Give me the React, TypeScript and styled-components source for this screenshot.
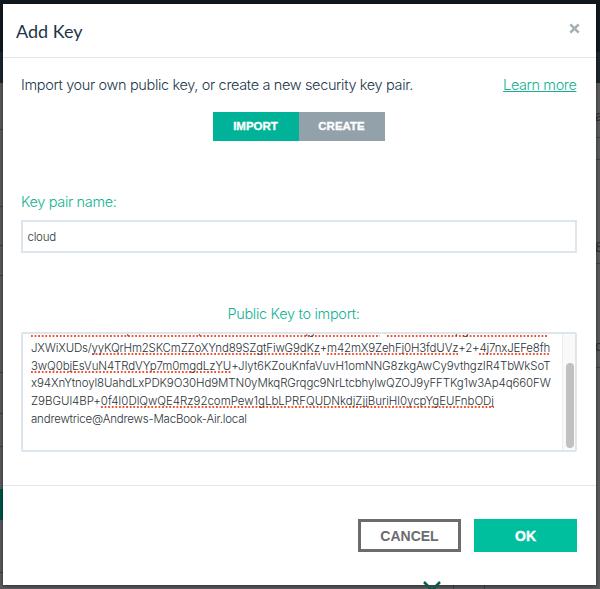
import React from "react";
import styled, { createGlobalStyle } from "styled-components";

const Global = createGlobalStyle`
  *{box-sizing:border-box}
  body{margin:0;background:#545659;font-family:Inter,"Liberation Sans",sans-serif;font-weight:300}
`;
const Backdrop = styled.div`
  width:600px;height:589px;padding:4px 4px 4px 3px;overflow:hidden;position:relative;
  background:linear-gradient(#11191f 0 52px,#1d272c 52px 83px,#5b5c5f 83px 100%);
`;
const Ghost = styled.span<{ $x: number; $y: number; $w: number; $h: number; $c: string }>`
  position:absolute;left:${p => p.$x}px;top:${p => p.$y}px;width:${p => p.$w}px;height:${p => p.$h}px;background:${p => p.$c};
`;
const GhostText = styled.span<{ $y: number }>`
  position:absolute;left:595px;top:${p => p.$y}px;font-size:13px;line-height:14px;font-weight:400;color:#2c2f31;
`;
const Chevron = styled.svg`position:absolute;left:421px;top:581px;width:22px;height:12px;`;
const Dialog = styled.section`
  position:relative;width:593px;height:581px;background:#fff;display:flex;flex-direction:column;
  box-shadow:0 1px 4px rgba(0,0,0,.55);
`;
const Header = styled.header`
  height:54px;border-bottom:1px solid #e5e5e5;padding:0 15px 0 13px;display:flex;justify-content:space-between;align-items:center;
`;
const Title = styled.h1`margin:0;font:400 18px/24px Lato,sans-serif;color:#1d3649;`;
const Close = styled.button`
  border:0;background:none;padding:0;width:13px;height:13px;display:flex;align-items:center;justify-content:center;margin-top:-4px;
`;
const Body = styled.main`height:428px;padding:17px 19px 0 18px;border-bottom:1px solid #e5e5e5;display:flex;flex-direction:column;`;
const Intro = styled.div`height:20px;display:flex;justify-content:space-between;line-height:20px;font-size:14.5px;color:#1d3649;`;
const Fit = styled.span<{ $s?: number }>`letter-spacing:${p => p.$s ?? 0}px;white-space:nowrap;`;
const Link = styled.a`color:#12b293;text-decoration:underline;letter-spacing:-.4px;margin-right:.6px;`;
const Tabs = styled.div`display:flex;margin:17px 0 0 191.5px;height:29px;width:172px;`;
const Tab = styled.button<{ $on?: boolean }>`
  border:0;padding:0;flex:1;background:${p => (p.$on ? "#00b398" : "#92a1aa")};color:#fff;font:700 11.5px/29px "Liberation Sans",sans-serif;
  -webkit-text-stroke:.3px #fff;
`;
const Label = styled.label<{ $center?: boolean }>`
  display:block;margin:51px 0 8px;line-height:20px;font-size:14.5px;color:#12b293;text-align:${p => (p.$center ? "center" : "left")};
  padding-right:${p => (p.$center ? "11px" : "0")};
`;
const Input = styled.div`
  height:33px;border:2px solid #dde5ed;padding:1px 5px 0 4.5px;line-height:29px;font-size:11.5px;color:#333;
`;
const Area = styled.div`
  height:120px;border:2px solid #dde5ed;border-radius:2px;display:flex;overflow:hidden;
`;
const Text = styled.div`flex:1;padding-left:8px;margin-top:-11.7px;font-size:11.5px;color:#2b3338;`;
const Line = styled.div`height:17.7px;line-height:17.7px;white-space:pre;`;
const Misspelt = styled.span`
  background:linear-gradient(90deg,#f5502f 0 2px,transparent 2px) left bottom/3.6px 2px repeat-x;
`;
const Track = styled.div`width:14px;background:#faf9f9;border-left:1px solid #ededed;padding:29px 0 0 3px;`;
const Thumb = styled.div`width:8px;height:85px;border-radius:4px;background:#c1c1c1;`;
const Footer = styled.footer`display:flex;justify-content:flex-end;gap:13px;padding:33px 19px 0 0;`;
const Action = styled.button<{ $primary?: boolean }>`
  width:103px;height:33px;padding:0;
  border:${p => (p.$primary ? "0" : "3px solid #6c6c6e")};background:${p => (p.$primary ? "#00bf9f" : "#fff")};
  color:${p => (p.$primary ? "#fff" : "#6c6c6e")};font:700 14px/1 "Liberation Sans",sans-serif;
  -webkit-text-stroke:${p => (p.$primary ? ".4px #fff" : "0")};
`;

type Part = [string, boolean?];
const lines: { s: number; parts: Part[] }[] = [
  { s: -0.02, parts: [["UVCGVOtHanRkUpXaWwIGvtLqGhXdFhwHunmYwqgVxweNnkRe", true], ["+"], ["MmfMnVmwpgHhmkTmnxxka", true], ["+S"]] },
  { s: -0.18, parts: [["JXWiXUDs/"], ["yyKQrHm2SKCmZZoXYnd89SZgtFiwG9dKz", true], ["+"], ["m42mX9ZehFj0H3fdUVz", true], ["+2+"], ["4j7nxJEFe8fh", true]] },
  { s: -0.12, parts: [["3wQ0bjEsVuN4TRdVYp7m0mgdLzYU", true], ["+JIyt6KZouKnfaVuvH1omNNG8zkgAwCy9vthgzIR4TbWkSoT"]] },
  { s: -0.12, parts: [["x94XnYtnoyl8UahdLxPDK9O30Hd9MTN0yMkqRGrqgc9NrLtcbhylwQZOJ9yFFTKg1w3Ap4q660FW"]] },
  { s: -0.03, parts: [["Z9BGUl4BP+"], ["0f4I0DlQwQE4Rz92comPew1gLbLPRFQUDNkdjZjjBuriHl0ycpYgEUFnbODj", true]] },
  { s: -0.2, parts: [["andrewtrice@Andrews-MacBook-Air.local"]] },
];

export default function App() {
  return (
    <Backdrop>
      <Global />
      {[129, 206, 245, 275, 372, 413, 446, 572].map(y => <Ghost key={y} $x={0} $y={y} $w={3} $h={1} $c="#3d4042" />)}
      <Ghost $x={0} $y={489} $w={3} $h={31} $c="#00564a" />
      {[137, 159, 263, 367].map(y => <Ghost key={y} $x={596} $y={y} $w={4} $h={1} $c="#3f4244" />)}
      {[453, 484].map(x => <Ghost key={x} $x={x} $y={585} $w={1} $h={4} $c="#3f4244" />)}
      <GhostText $y={109}>a</GhostText>
      <GhostText $y={240}>8</GhostText>
      <GhostText $y={339}>o</GhostText>
      <Dialog>
        <Header>
          <Title>Add Key</Title>
          <Close aria-label="Close">
            <svg width="11" height="11" viewBox="0 0 11 11"><path d="M1.3 1.3 9.7 9.7M9.7 1.3 1.3 9.7" stroke="#a5afb4" strokeWidth="2.6" /></svg>
          </Close>
        </Header>
        <Body>
          <Intro><Fit $s={-0.35}>Import your own public key, or create a new security key pair.</Fit><Link>Learn more</Link></Intro>
          <Tabs><Tab $on>IMPORT</Tab><Tab>CREATE</Tab></Tabs>
          <Label><Fit $s={-0.33}>Key pair name:</Fit></Label>
          <Input><Fit $s={-0.25}>cloud</Fit></Input>
          <Label $center><Fit $s={-0.3}>Public Key to import:</Fit></Label>
          <Area>
            <Text>{lines.map((l, i) => (
              <Line key={i}><Fit $s={l.s}>{l.parts.map(([t, bad], j) => (bad ? <Misspelt key={j}>{t}</Misspelt> : t))}</Fit></Line>
            ))}</Text>
            <Track><Thumb /></Track>
          </Area>
        </Body>
        <Footer><Action>CANCEL</Action><Action $primary>OK</Action></Footer>
      </Dialog>
      <Chevron viewBox="0 0 22 12"><path d="M3 1l8 8 8-8" stroke="#0b5a4d" strokeWidth="2.5" fill="none" /></Chevron>
    </Backdrop>
  );
}
